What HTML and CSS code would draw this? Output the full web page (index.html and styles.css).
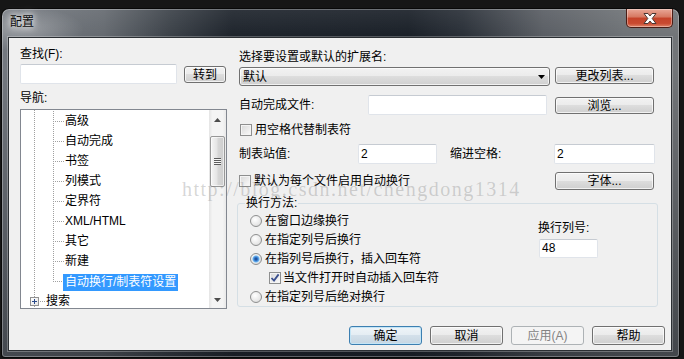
FILE: index.html
```html
<!doctype html>
<html lang="zh-CN">
    <head>
        <meta charset="UTF-8">
        <title>配置</title>
        <link rel="stylesheet" href="styles.css">
    </head>
    <body>
        <div class="window">
            <div class="titlebar">
                <span class="title">配置</span>
                <div class="close">
                    <svg width="14" height="11" viewBox="0 0 14 11">
                        <path d="M1 0.5H5L7 3L9 0.5H13L9.2 5.5L13 10.5H9L7 8L5 10.5H1L4.8 5.5Z" fill="#fff" stroke="#4a3633" stroke-width="1"/>
                    </svg>
                </div>
            </div>

            <div class="content">
                <div class="main">
                    <!-- left | find + navigation tree -->
                    <div class="left">
                        <div class="label">查找(F):</div>
                        <div class="find-row">
                            <div class="input find-input"></div>
                            <div class="btn go-btn">转到</div>
                        </div>
                        <div class="label nav-label">导航:</div>
                        <div class="tree">
                            <ul class="tree-list">
                                <li class="node">高级</li>
                                <li class="node">自动完成</li>
                                <li class="node">书签</li>
                                <li class="node">列模式</li>
                                <li class="node">定界符</li>
                                <li class="node">XML/HTML</li>
                                <li class="node">其它</li>
                                <li class="node">新建</li>
                                <li class="node node--last"><span class="selected">自动换行/制表符设置</span></li>
                                <li class="root">
                                    <span class="expander">
                                        <svg width="5" height="5" viewBox="0 0 5 5">
                                            <rect x="0" y="2" width="5" height="1" fill="#2b4a8a"/>
                                            <rect x="2" y="0" width="1" height="5" fill="#2b4a8a"/>
                                        </svg>
                                    </span>
                                    <span class="root-dots"></span>
                                    <span>搜索</span>
                                </li>
                            </ul>
                            <div class="scrollbar">
                                <div class="sb-btn">
                                    <svg width="7" height="4" viewBox="0 0 7 4"><polygon points="0,4 7,4 3.5,0" fill="#4d4d4d"/></svg>
                                </div>
                                <div class="thumb"><span class="grip"></span></div>
                                <div class="sb-btn sb-btn--down">
                                    <svg width="7" height="4" viewBox="0 0 7 4"><polygon points="0,0 7,0 3.5,4" fill="#4d4d4d"/></svg>
                                </div>
                            </div>
                        </div>
                    </div>

                    <!-- right | settings -->
                    <div class="right">
                        <div class="label ext-label">选择要设置或默认的扩展名:</div>
                        <div class="row row--combo">
                            <div class="combo">
                                <span>默认</span>
                                <svg width="7" height="4" viewBox="0 0 7 4"><polygon points="0,0 7,0 3.5,4" fill="#000"/></svg>
                            </div>
                            <div class="btn btn--side">更改列表...</div>
                        </div>

                        <div class="row row--file">
                            <span class="field-label field-label--file">自动完成文件:</span>
                            <div class="input input--file"></div>
                            <div class="btn btn--side">浏览...</div>
                        </div>

                        <div class="check-row">
                            <span class="checkbox"></span>
                            <span>用空格代替制表符</span>
                        </div>

                        <div class="row row--tabs">
                            <span class="field-label field-label--tab">制表站值:</span>
                            <div class="input input--tab">2</div>
                            <span class="field-label field-label--indent">缩进空格:</span>
                            <div class="input input--indent">2</div>
                        </div>

                        <div class="row row--wrap">
                            <span class="checkbox"></span>
                            <span>默认为每个文件启用自动换行</span>
                            <div class="btn btn--side btn--font">字体...</div>
                        </div>

                        <fieldset class="wrap-group">
                            <legend>换行方法:</legend>
                            <div class="wrap-body">
                                <div class="options">
                                    <div class="option"><span class="radio"></span>在窗口边缘换行</div>
                                    <div class="option"><span class="radio"></span>在指定列号后换行</div>
                                    <div class="option"><span class="radio radio--on"></span>在指列号后换行，插入回车符</div>
                                    <div class="option option--sub">
                                        <span class="checkbox checkbox--on">
                                            <svg width="10" height="10" viewBox="0 0 10 10">
                                                <path d="M1.5 5L4 7.6L8.6 1.4" fill="none" stroke="#3a4f8e" stroke-width="1.8"/>
                                            </svg>
                                        </span>
                                        当文件打开时自动插入回车符
                                    </div>
                                    <div class="option"><span class="radio"></span>在指定列号后绝对换行</div>
                                </div>
                                <div class="col-right">
                                    <div class="label">换行列号:</div>
                                    <div class="input input--col">48</div>
                                </div>
                            </div>
                        </fieldset>
                    </div>
                </div>

                <div class="buttons">
                    <div class="btn btn--dialog btn--default">确定</div>
                    <div class="btn btn--dialog">取消</div>
                    <div class="btn btn--dialog btn--disabled">应用(A)</div>
                    <div class="btn btn--dialog">帮助</div>
                </div>

                <div class="watermark">http://blog.csdn.net/chengdong1314</div>
            </div>
        </div>
    </body>
</html>
```

FILE: styles.css
```css
/* base */
*,
*::before,
*::after {
    box-sizing: border-box;
    padding: 0;
    margin: 0;
}

body {
    width: 684px;
    height: 359px;
    overflow: hidden;
    background-color: #161616;
    font-family: "Liberation Sans", "Noto Sans CJK SC", sans-serif;
    font-size: 12px;
    line-height: 14px;
    color: #000;
}

/* window frame */
.window {
    width: 677px;
    height: 348px;
    margin: 9px 0 0 2px;
    padding: 0 7px 6px 6px;
    border-radius: 7px 7px 3px 3px;
    background:
        radial-gradient(ellipse 60px 22px at 22px 20px, rgb(255 255 255 / 28%), transparent),
        linear-gradient(to bottom, rgb(255 255 255 / 8%) 0, transparent 28px, transparent 60px, rgb(20 24 30 / 50%) 100%),
        linear-gradient(to right, #747980 0%, #656a70 15%, #3b4148 25%, #1e242c 34%, #1a2028 60%, #2a3038 68%, #5a5e64 80%, #6e7276 92%, #727578 100%);
    box-shadow:
        0 0 0 1px rgb(0 0 0 / 60%),
        inset 0 0 0 1px rgb(255 255 255 / 30%);
}

.titlebar {
    display: flex;
    justify-content: space-between;
    align-items: flex-start;
    height: 28px;
    padding-left: 2px;
}

.title {
    margin-top: 6px;
    color: #0c0c0c;
    text-shadow: 0 0 6px #fff, 0 0 10px rgb(255 255 255 / 80%);
}

.close {
    display: flex;
    align-items: center;
    justify-content: center;
    width: 47px;
    height: 19px;
    margin-right: -1px;
    border: 1px solid #4a1d15;
    border-top: 0;
    border-radius: 0 0 5px 5px;
    background: linear-gradient(to bottom, #e9a898 0%, #d67760 45%, #c5432a 50%, #c94a30 80%, #e08468 100%);
    box-shadow: inset 0 0 0 1px rgb(255 255 255 / 35%);
}

.content {
    position: relative;
    display: flex;
    flex-direction: column;
    height: 314px;
    border: 1px solid #2b2f33;
    background-color: #f0f0f0;
    box-shadow: 0 0 0 1px rgb(255 255 255 / 25%);
}

.main {
    display: flex;
    gap: 10px;
    padding-left: 11px;
}

/* common controls */
.btn {
    display: flex;
    align-items: center;
    justify-content: center;
    border: 1px solid #707070;
    border-radius: 3px;
    background: linear-gradient(to bottom, #f2f2f2 0%, #ebebeb 49%, #dddddd 50%, #cfcfcf 100%);
    box-shadow: inset 0 0 0 1px rgb(255 255 255 / 70%);
    white-space: nowrap;
}

.input {
    padding-left: 2px;
    border: 1px solid #e0e4ea;
    border-top-color: #c6cbd2;
    border-radius: 2px;
    background-color: #fff;
    line-height: 18px;
}

.checkbox {
    display: flex;
    align-items: center;
    justify-content: center;
    flex: none;
    width: 12px;
    height: 12px;
    margin-right: 3px;
    border: 1px solid #8e8f8f;
    background: linear-gradient(135deg, #d8d8d8, #fbfbfb);
    box-shadow: inset 0 0 0 1px #f4f4f4;
}

.radio {
    flex: none;
    width: 12px;
    height: 12px;
    margin-right: 3px;
    border: 1px solid #8e8f8f;
    border-radius: 50%;
    background: radial-gradient(circle at 40% 35%, #fff, #e8e8e8 60%, #cfcfcf);
}

.radio--on {
    background:
        radial-gradient(circle, #163f80 0, #2c6cc0 1.5px, #6ab2ee 3px, #b8dbf5 3.6px, transparent 4px),
        radial-gradient(circle at 40% 35%, #fff, #e8e8e8 60%, #cfcfcf);
}

/* left | find + tree */
.left {
    width: 207px;
    padding-top: 9px;
}

.find-row {
    display: flex;
    align-items: flex-start;
    gap: 7px;
    margin-top: 3px;
}

.find-input {
    width: 157px;
    height: 20px;
}

.go-btn {
    width: 42px;
    height: 17px;
    margin-top: 2px;
}

.nav-label {
    margin-top: 7px;
}

.tree {
    display: flex;
    width: 207px;
    height: 200px;
    margin-top: 4px;
    border: 1px solid #828790;
    background-color: #fff;
}

.tree-list {
    flex: 1;
    overflow: hidden;
    padding-top: 1px;
    list-style: none;
    background: repeating-linear-gradient(to bottom, #a0a0a0 0 1px, transparent 1px 2px) 13px 0 / 1px 100% no-repeat;
}

.node {
    display: flex;
    align-items: center;
    height: 20px;
    padding-left: 44px;
    background:
        repeating-linear-gradient(to right, #a0a0a0 0 1px, transparent 1px 2px) 34px 10px / 9px 1px no-repeat,
        repeating-linear-gradient(to bottom, #a0a0a0 0 1px, transparent 1px 2px) 32px 0 / 1px 100% no-repeat;
}

.node--last {
    align-items: flex-end;
    background-size: 9px 1px, 1px 11px;
}

.selected {
    margin-left: -2px;
    padding: 0 2px;
    background-color: #3399ff;
    color: #fff;
    line-height: 17px;
}

.root {
    display: flex;
    align-items: center;
    height: 20px;
    padding-left: 9px;
}

.expander {
    display: flex;
    align-items: center;
    justify-content: center;
    width: 9px;
    height: 9px;
    border: 1px solid #919191;
    background: linear-gradient(135deg, #fff, #e6e6e6);
}

.root-dots {
    width: 7px;
    height: 1px;
    background: repeating-linear-gradient(to right, transparent 0 1px, #a0a0a0 1px 2px);
}

.scrollbar {
    display: flex;
    flex-direction: column;
    align-items: center;
    width: 17px;
    background: linear-gradient(to right, #e4e4e4, #f4f4f4 20%, #f4f4f4 80%, #e9e9e9);
}

.sb-btn {
    display: flex;
    align-items: center;
    justify-content: center;
    width: 17px;
    height: 17px;
    padding-top: 2px;
}

.sb-btn--down {
    margin-top: auto;
    padding-top: 0;
}

.thumb {
    display: flex;
    align-items: center;
    justify-content: center;
    width: 15px;
    height: 51px;
    margin-top: 9px;
    border: 1px solid #979797;
    border-radius: 2px;
    background: linear-gradient(to right, #f5f5f5, #e4e4e4 45%, #d6d6d6 55%, #cdcdcd);
    box-shadow: inset 0 0 0 1px rgb(255 255 255 / 60%);
}

.grip {
    width: 7px;
    height: 7px;
    background: repeating-linear-gradient(to bottom, #5b5b5b 0 1px, #f6f6f6 1px 2px);
}

/* right | settings */
.right {
    width: 421px;
    padding-top: 12px;
}

.ext-label {
    padding-left: 2px;
}

.row {
    display: flex;
    align-items: flex-start;
}

.row--combo {
    margin-top: 3px;
}

.combo {
    display: flex;
    justify-content: space-between;
    align-items: center;
    width: 311px;
    height: 19px;
    margin-left: 2px;
    padding: 0 4px 0 3px;
    border: 1px solid #707070;
    border-radius: 3px;
    background: linear-gradient(to bottom, #f2f2f2 0%, #ebebeb 49%, #dddddd 50%, #cfcfcf 100%);
    box-shadow: inset 0 0 0 1px rgb(255 255 255 / 70%);
}

.btn--side {
    width: 99px;
    height: 17px;
    margin-right: 4px;
    margin-left: auto;
}

.row--file {
    margin-top: 9px;
}

.row--file .btn--side {
    margin-top: 2px;
}

.field-label {
    padding-left: 2px;
    line-height: 20px;
}

.field-label--file {
    width: 131px;
}

.input--file {
    width: 179px;
    height: 20px;
}

.check-row {
    display: flex;
    align-items: center;
    height: 14px;
    margin-top: 8px;
    padding-left: 3px;
}

.row--tabs {
    margin-top: 7px;
}

.field-label--tab {
    width: 121px;
}

.input--tab {
    width: 79px;
    height: 20px;
}

.field-label--indent {
    width: 104px;
    margin-left: 13px;
    padding-left: 0;
}

.input--indent {
    width: 101px;
    height: 20px;
}

.row--wrap {
    align-items: center;
    height: 19px;
    margin-top: 7px;
    padding-left: 2px;
}

.btn--font {
    height: 18px;
}

/* group | wrap method */
.wrap-group {
    min-inline-size: 0;
    height: 111px;
    margin-top: 6px;
    padding: 1px 0 0 7px;
    border: 1px solid #d5dfe5;
    border-radius: 3px;
}

.wrap-group legend {
    padding: 0 1px;
    line-height: 14px;
}

.wrap-body {
    display: flex;
}

.options {
    width: 293px;
    padding-left: 5px;
}

.option {
    display: flex;
    align-items: center;
    height: 19px;
}

.option--sub {
    padding-left: 19px;
}

.option--sub .checkbox {
    margin-right: 2px;
}

.col-right {
    padding-top: 10px;
}

.input--col {
    width: 59px;
    height: 19px;
    margin-top: 4px;
    margin-left: 1px;
    line-height: 17px;
}

/* dialog buttons */
.buttons {
    display: flex;
    justify-content: flex-end;
    gap: 8px;
    margin-top: 17px;
    padding-right: 6px;
}

.btn--dialog {
    width: 73px;
    height: 19px;
}

.btn--default {
    border-color: #3c7fb1;
    background: linear-gradient(to bottom, #eef4f8 0%, #e4edf3 49%, #d3e0ea 50%, #c6d6e2 100%);
    box-shadow: inset 0 0 0 1px #c4e5f6;
}

.btn--disabled {
    border-color: #adb2b5;
    background: #f4f4f4;
    box-shadow: none;
    color: #838383;
}

/* watermark over the dialog */
.watermark {
    position: absolute;
    top: 141px;
    left: 173px;
    font-family: "Liberation Serif", serif;
    font-size: 20px;
    line-height: 20px;
    letter-spacing: 1.5px;
    color: rgb(110 110 110 / 28%);
    white-space: nowrap;
    pointer-events: none;
}
```
